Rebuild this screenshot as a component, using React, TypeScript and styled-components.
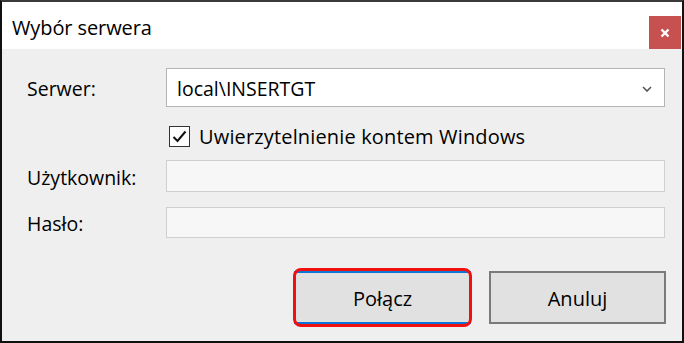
import React from "react";
import styled, { createGlobalStyle } from "styled-components";

const Global = createGlobalStyle`
  html, body { margin: 0; padding: 0; background: #ffffff; }
  body { font-family: "Open Sans", "Noto Sans", "Liberation Sans", sans-serif; }
`;

const Window = styled.div`
  width: 684px;
  height: 343px;
  box-sizing: border-box;
  border: 2px solid #111;
  border-top-color: #3a3a3a;
  display: flex;
  flex-direction: column;
  background: #efefef;
`;

const TitleBar = styled.div`
  height: 47px;
  background: #ffffff;
  display: flex;
  align-items: flex-end;
  justify-content: space-between;
  padding-right: 1px;
`;

const Title = styled.div`
  align-self: center;
  margin-left: 10px;
  margin-top: 4px;
  font-size: 20px;
  color: #000;
  letter-spacing: -0.1px;
`;

const CloseButton = styled.div`
  width: 32px;
  height: 33px;
  background: #c75050;
  display: flex;
  align-items: center;
  justify-content: center;
`;

const Body = styled.div`
  flex: 1;
  padding: 19px 16px 0 25px;
  display: flex;
  flex-direction: column;
`;

const FieldRow = styled.div<{ $h: number; $mt: number }>`
  display: grid;
  grid-template-columns: 139px 499px;
  align-items: center;
  height: ${(p) => p.$h}px;
  margin-top: ${(p) => p.$mt}px;
`;

const Label = styled.div`
  font-size: 19.5px;
  color: #000;
  letter-spacing: 0;
  padding-top: 2px;
`;

const Combo = styled.div`
  box-sizing: border-box;
  height: 39px;
  background: #fff;
  border: 1px solid #b4b4b4;
  display: flex;
  align-items: center;
  justify-content: space-between;
  padding: 2px 12px 0 10px;
  font-size: 19.5px;
  letter-spacing: 0;
  color: #000;
`;

const TextBox = styled.div<{ $h: number }>`
  box-sizing: border-box;
  height: ${(p) => p.$h}px;
  background: #f7f7f7;
  border: 1px solid #cfcfcf;
`;

const CheckWrap = styled.label`
  display: flex;
  align-items: center;
  gap: 9px;
  font-size: 20px;
  letter-spacing: 0.15px;
  color: #000;
  padding-left: 3px;
`;

const CheckBox = styled.span`
  width: 21px;
  height: 21px;
  box-sizing: border-box;
  border: 1px solid #333;
  background: #fff;
  display: flex;
  align-items: center;
  justify-content: center;
`;

const ButtonRow = styled.div`
  display: flex;
  justify-content: flex-end;
  gap: 18px;
  margin-top: 33px;
`;

const Button = styled.div<{ $focused?: boolean }>`
  position: relative;
  width: 177px;
  height: 53px;
  box-sizing: border-box;
  background: #e1e1e1;
  border: 2px solid ${(p) => (p.$focused ? "#0a74d8" : "#7a7a7a")};
  display: flex;
  align-items: center;
  justify-content: center;
  padding-top: 2px;
  font-size: 20px;
  color: #000;
`;

const Highlight = styled.span`
  position: absolute;
  inset: -5px -3px -5px -3px;
  border: 3.5px solid #f01010;
  border-radius: 8px;
  pointer-events: none;
`;

export default function App() {
  return (
    <>
      <Global />
      <Window>
        <TitleBar>
          <Title>Wybór serwera</Title>
          <CloseButton>
            <svg width="10" height="10" viewBox="0 0 10 10">
              <path d="M1.5 1.5 L8.5 8.5 M8.5 1.5 L1.5 8.5" stroke="#fff" strokeWidth="2.4" />
            </svg>
          </CloseButton>
        </TitleBar>
        <Body>
          <FieldRow $h={39} $mt={0}>
            <Label>Serwer:</Label>
            <Combo>
              <span>local\INSERTGT</span>
              <svg width="10" height="6" viewBox="0 0 10 6">
                <path d="M1 1 L5 5 L9 1" stroke="#555" strokeWidth="1.6" fill="none" />
              </svg>
            </Combo>
          </FieldRow>
          <FieldRow $h={22} $mt={16}>
            <span />
            <CheckWrap>
              <CheckBox>
                <svg width="15" height="13" viewBox="0 0 15 13">
                  <path d="M1.5 7 L5.5 11 L13.5 1.5" stroke="#111" strokeWidth="2" fill="none" />
                </svg>
              </CheckBox>
              Uwierzytelnienie kontem Windows
            </CheckWrap>
          </FieldRow>
          <FieldRow $h={32} $mt={15}>
            <Label>Użytkownik:</Label>
            <TextBox $h={32} />
          </FieldRow>
          <FieldRow $h={31} $mt={15}>
            <Label>Hasło:</Label>
            <TextBox $h={31} />
          </FieldRow>
          <ButtonRow>
            <Button $focused>
              Połącz
              <Highlight />
            </Button>
            <Button>Anuluj</Button>
          </ButtonRow>
        </Body>
      </Window>
    </>
  );
}
